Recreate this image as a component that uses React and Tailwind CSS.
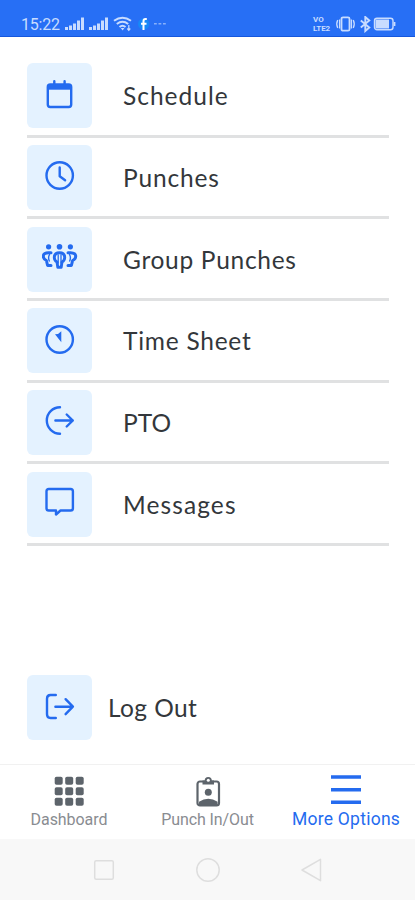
function ScheduleIcon() {
  return (
    <>
      <rect x="5.8" y="6.4" width="23.4" height="22.6" rx="2.5" />
      <path d="M5.8 9.2h23.4" strokeWidth="5" strokeLinecap="butt" />
      <path d="M12.3 3.2v4M22.6 3.2v4" />
    </>
  );
}

function PunchesIcon() {
  return (
    <>
      <circle cx="17.7" cy="16.5" r="13.2" />
      <path d="M17.7 8.5v8.8l5.4 4" />
    </>
  );
}

function GroupIcon() {
  return (
    <>
      <g fill="currentColor" stroke="none">
        <circle cx="6.6" cy="5.8" r="2.6" />
        <circle cx="17.5" cy="5.8" r="2.8" />
        <circle cx="28.4" cy="5.8" r="2.6" />
      </g>
      <path d="M9 11.8H6.5Q1.5 12 1.3 15Q1.2 18 4.4 19.5L5.6 24.5H9M26 11.8H28.5Q33.5 12 33.7 15Q33.8 18 30.6 19.5L29.4 24.5H26" strokeWidth="3" />
      <path d="M7.5 13.5Q5.8 16.5 7.3 20M27.5 13.5Q29.2 16.5 27.7 20" strokeWidth="1.4" />
      <path d="M17.5 11.7Q12.3 11.7 12.3 16.5Q12.3 19.5 15 21L15.8 26.3H19.2L20 21Q22.7 19.5 22.7 16.5Q22.7 11.7 17.5 11.7Z" strokeWidth="2.9" />
      <path d="M16.2 14v8M19 14v8" strokeWidth="1.3" />
    </>
  );
}

function TimeSheetIcon() {
  return (
    <>
      <circle cx="17.7" cy="16.5" r="13.2" />
      <path d="M13 11.2l3-.3 3.300-2.700v11z" fill="currentColor" stroke="none" />
    </>
  );
}

function PtoIcon() {
  return (
    <>
      <path d="M18 3.3a13.2 13.2 0 0 0 0 26.4" />
      <path d="M13.4 16.5h17.4M24.7 10.5l6.1 6-6.1 6" />
    </>
  );
}

function MessagesIcon() {
  return <path d="M6.8 3h21.8q2.3 0 2.3 2.3v16.900q0 2.300-2.300 2.300H18.500l-4.500 4v-4H6.800q-2.300 0-2.300-2.300V5.300q0-2.300 2.300-2.300z" />;
}

function LogOutIcon() {
  return (
    <>
      <path d="M13.8 5H8.5q-3.5 0-3.5 3.7v15.6q0 3.7 3.5 3.7h5.3" />
      <path d="M13.4 16.7h17.4M23.6 9.2l7.3 7.5-7.3 7.5" />
    </>
  );
}

const menuItems = [
  { label: "Schedule", icon: ScheduleIcon, spacing: "tracking-[1px]" },
  { label: "Punches", icon: PunchesIcon, spacing: "tracking-[0.85px]" },
  { label: "Group Punches", icon: GroupIcon, spacing: "tracking-[0.7px]" },
  { label: "Time Sheet", icon: TimeSheetIcon, spacing: "tracking-[0.75px]" },
  { label: "PTO", icon: PtoIcon, spacing: "tracking-normal" },
  { label: "Messages", icon: MessagesIcon, spacing: "tracking-[1.1px]" },
];

function IconTile({ icon: Icon }) {
  return (
    <div className="flex h-[65px] w-[65px] shrink-0 items-center justify-center rounded-md bg-[#e4f2ff] text-[#246bef]">
      <svg
        width="36"
        height="36"
        viewBox="0 0 36 36"
        fill="none"
        stroke="currentColor"
        strokeWidth="2.4"
        strokeLinecap="round"
        strokeLinejoin="round"
      >
        <Icon />
      </svg>
    </div>
  );
}

function StatusBar() {
  return (
    <header className="flex h-[37px] shrink-0 items-end border-b border-[#1557dd] bg-[#276ff5] pr-[18px] pb-[3px] pl-[21px] text-[#c8dcff]">
      <span className="w-[43px] font-['Roboto',sans-serif] text-[16px] leading-[17px] tracking-[-0.2px]">15:22</span>
      <svg width="44" height="17" viewBox="0 0 44 17" fill="currentColor">
        <path d="M1 11h3v3H1zM5 9.5h3V14H5zM9 7.5h3V14H9zM13 4.5h3V14h-3zM17 1.5h3V14h-3zM25 11h3v3h-3zM29 9.5h3V14h-3zM33 7.5h3V14h-3zM37 4.5h3V14h-3zM41 1.5h3V14h-3z" />
      </svg>
      <svg className="ml-[5px]" width="20" height="17" viewBox="0 0 20 17" fill="none" stroke="currentColor" strokeWidth="2">
        <path d="M1 4.8Q9.5-1.5 18 4.8M3.8 8Q9.5 3.5 15.2 8M6.5 11Q9.5 8.5 12.5 11" />
        <path d="M7.8 12h3.6l-1.8 2.5z" fill="currentColor" stroke="none" />
        <path d="M15.8 9v5M14.3 12.5l1.5 1.8 1.5-1.8" strokeWidth="1.2" />
      </svg>
      <svg className="ml-[5px]" width="12" height="17" viewBox="0 0 12 17">
        <circle cx="5.7" cy="8" r="5.7" fill="#1688f8" />
        <path d="M8.8 3H7.5q-2 0-2 2v9M3 7.8h5.5" fill="none" stroke="#fff" strokeWidth="2" />
      </svg>
      <svg className="ml-[4px]" width="12" height="17" viewBox="0 0 12 17" fill="currentColor" opacity="0.6">
        <path d="M0 7h2.8v1.5H0zM4.5 7h2.8v1.5H4.5zM9 7h2.8v1.5H9z" />
      </svg>
      <div className="ml-auto flex items-center">
        <div className="flex w-[22px] flex-col font-['Roboto',sans-serif] text-[8px] leading-[9px] font-bold">
          <span>VO</span>
          <span className="tracking-[-0.1px]">LTE2</span>
        </div>
        <svg width="22" height="17" viewBox="0 0 22 17" fill="none" stroke="currentColor" strokeWidth="1.8">
          <rect x="6.5" y="1.3" width="8" height="13.4" rx="1.5" />
          <path d="M4.6 3.5v9M16.4 3.5v9M2.7 4Q.8 8 2.7 12M18.3 4Q20.2 8 18.3 12" strokeWidth="1.3" />
        </svg>
        <svg className="ml-[2px]" width="13" height="17" viewBox="0 0 13 17" fill="none" stroke="currentColor" strokeWidth="1.9">
          <path d="M1.8 4.5l8.500 7-4 3.500V1l4 3.500-8.500 7" />
        </svg>
        <svg className="ml-[1px]" width="24" height="17" viewBox="0 0 24 17" fill="none" stroke="currentColor" strokeWidth="1.4">
          <rect x="1.5" y="2.3" width="18.5" height="11.4" rx="2.5" />
          <rect x="2.5" y="3.5" width="13.5" height="9" fill="currentColor" stroke="none" />
          <path d="M21.5 6v4" strokeWidth="1.8" />
        </svg>
      </div>
    </header>
  );
}

function BottomTabs() {
  return (
    <nav className="flex h-[75px] shrink-0 border-t border-[#f1f1f1] bg-white font-['Roboto',sans-serif]">
      <div className="flex w-[138px] flex-col items-center pt-[10px] text-[#898c91]">
        <svg className="text-[#5d646b]" width="30" height="32" viewBox="0 0 30 32" fill="currentColor">
          {[1, 11.5, 22].map((y) =>
            [1, 11.5, 22].map((x) => (
              <rect key={`${x}-${y}`} x={x - 0.3} y={y + 0.8} width="8" height="8" rx="1.8" />
            ))
          )}
        </svg>
        <span className="mt-[2px] text-[16px] leading-[21px] tracking-[-0.05px] whitespace-nowrap">Dashboard</span>
      </div>
      <div className="flex w-[139px] flex-col items-center pt-[10px] text-[#898c91]">
        <svg className="text-[#5d646b]" width="30" height="32" viewBox="0 0 30 32" fill="none" stroke="currentColor" strokeWidth="2.2">
          <rect x="4.5" y="6.5" width="21.5" height="24" rx="2.5" />
          <path d="M9.5 9.5h11.500V5.500h-2.200a3.500 3.500 0 0 0-7.100 0H9.500z" fill="currentColor" stroke="none" />
          <circle cx="15.3" cy="5.3" r="1.5" fill="#fff" stroke="none" />
          <circle cx="15.3" cy="17.2" r="3.5" fill="currentColor" stroke="none" />
          <path d="M6 30v-3.200q9.300-6.300 18.600 0V30z" fill="currentColor" stroke="none" />
        </svg>
        <span className="mt-[2px] text-[16px] leading-[21px] tracking-[-0.1px] whitespace-nowrap">Punch In/Out</span>
      </div>
      <div className="flex w-[138px] flex-col items-center pt-[8px] text-[#246bef]">
        <svg width="30" height="32" viewBox="0 0 30 32" fill="none" stroke="currentColor" strokeWidth="3.6">
          <path d="M0 4h30M0 16.700h30M0 29.200h30" />
        </svg>
        <span className="mt-[3px] text-[17.5px] leading-[22px] tracking-[0.25px] whitespace-nowrap">More Options</span>
      </div>
    </nav>
  );
}

function SystemNav() {
  return (
    <div className="flex h-[61px] shrink-0 items-center justify-center gap-[80px] bg-[#f8f8f8] text-[#dedede]">
      <svg width="24" height="24" viewBox="0 0 24 24" fill="none" stroke="currentColor" strokeWidth="1.5">
        <rect x="2.7" y="2.7" width="18.6" height="18.6" rx="1.5" />
      </svg>
      <svg width="24" height="24" viewBox="0 0 24 24" fill="none" stroke="currentColor" strokeWidth="1.5">
        <circle cx="12" cy="12" r="11.2" />
      </svg>
      <svg width="24" height="24" viewBox="0 0 24 24" fill="none" stroke="currentColor" strokeWidth="1.5" strokeLinejoin="round">
        <path d="M2 12L20.5 1.3v21.400z" />
      </svg>
    </div>
  );
}

export default function App() {
  return (
    <div className="flex h-[900px] w-[415px] flex-col overflow-hidden bg-white font-['Lato',sans-serif] text-[24.5px] text-[#33373b]">
      <StatusBar />

      <main className="flex flex-1 flex-col px-[27px] pt-[19px]">
        {menuItems.map((item) => (
          <div
            key={item.label}
            className="flex h-[81.7px] w-[362px] shrink-0 items-end border-b-[3px] border-[#e0e1e2] pb-[6.5px]"
          >
            <IconTile icon={item.icon} />
            <span className={`ml-[31px] leading-[65px] whitespace-nowrap ${item.spacing}`}>{item.label}</span>
          </div>
        ))}

        <div className="mt-auto mb-[24px] flex items-center">
          <IconTile icon={LogOutIcon} />
          <span className="ml-[16px] leading-[64px] tracking-[0.4px] whitespace-nowrap">Log Out</span>
        </div>
      </main>

      <BottomTabs />
      <SystemNav />
    </div>
  );
}
